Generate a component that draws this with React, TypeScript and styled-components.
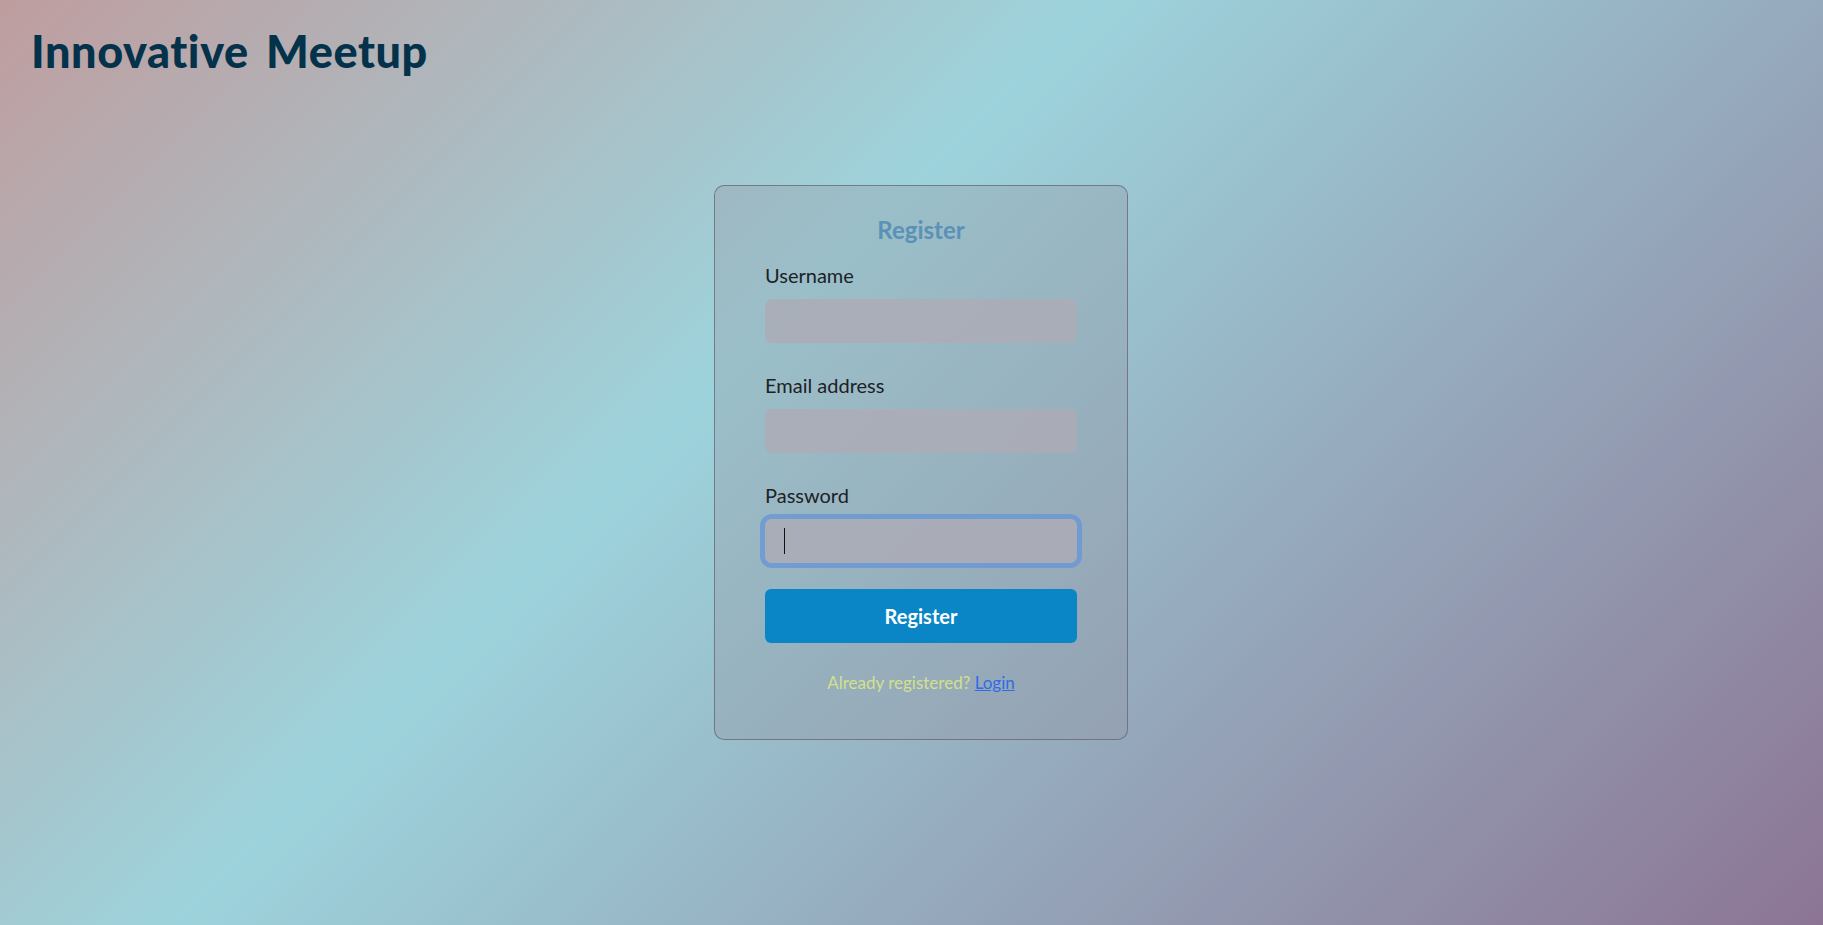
import React from "react";
import styled, { createGlobalStyle } from "styled-components";

const Global = createGlobalStyle`
  html, body { margin: 0; padding: 0; }
  body {
    font-family: "Segoe UI", Lato, "Open Sans", sans-serif;
    min-height: 100vh;
  }
  * { box-sizing: border-box; }
`;

const Page = styled.div`
  min-height: 925px;
  background: linear-gradient(135deg, #bf9d9f 0%, #9dd3dc 40%, #8c7594 100%);
  display: flex;
  flex-direction: column;
`;

const Header = styled.header`
  padding: 19px 31px 0;
  height: 185px;
`;

const Brand = styled.h1`
  margin: 0;
  font-family: "Comic Sans MS", Lato, sans-serif;
  font-weight: 900;
  font-size: 45px;
  line-height: 64px;
  letter-spacing: 0.6px;
  word-spacing: 6px;
  color: #04324a;
`;

const Main = styled.main`
  display: flex;
  justify-content: center;
  padding-left: 19px;
`;

const Card = styled.form`
  width: 414px;
  padding: 28px 50px 44px;
  border: 1px solid rgba(100, 100, 112, 0.75);
  border-radius: 10px;
  background: rgba(150, 150, 162, 0.32);
  display: flex;
  flex-direction: column;
`;

const Title = styled.h2`
  margin: 0 0 14px;
  text-align: center;
  font-size: 24px;
  line-height: 32px;
  font-weight: 700;
  color: #5a91b6;
`;

const Field = styled.div<{ $last?: boolean }>`
  display: flex;
  flex-direction: column;
  margin-bottom: ${(p) => (p.$last ? "26px" : "27px")};
`;

const Label = styled.label`
  font-size: 20px;
  line-height: 30px;
  color: #1d2226;
  margin-bottom: 9px;
`;

const InputWrap = styled.div`
  position: relative;
`;

const Input = styled.input<{ $focused?: boolean }>`
  width: 100%;
  height: 44px;
  padding: 0 18px;
  font-size: 20px;
  font-family: inherit;
  border: none;
  border-radius: 7px;
  background: rgba(172, 172, 182, 0.85);
  outline: none;
  caret-color: transparent;
  box-shadow: ${(p) => (p.$focused ? "0 0 0 5px rgba(104, 150, 214, 0.8)" : "none")};
`;

const Caret = styled.span`
  position: absolute;
  left: 19px;
  top: 9px;
  width: 1px;
  height: 26px;
  background: #111;
`;

const Button = styled.button`
  height: 54px;
  border: none;
  border-radius: 6px;
  background: #0a85c5;
  color: #fff;
  font-family: inherit;
  font-size: 20px;
  font-weight: 700;
  cursor: pointer;
`;

const Footer = styled.p`
  margin: 28px 0 0;
  text-align: center;
  font-size: 17px;
  line-height: 24px;
  color: #d3e08c;
`;

const LoginLink = styled.a`
  color: #2f6be8;
  text-decoration: underline;
`;

export default function App() {
  return (
    <>
      <Global />
      <Page>
        <Header>
          <Brand>Innovative Meetup</Brand>
        </Header>
        <Main>
          <Card onSubmit={(e) => e.preventDefault()}>
            <Title>Register</Title>
            <Field>
              <Label htmlFor="username">Username</Label>
              <Input id="username" type="text" />
            </Field>
            <Field>
              <Label htmlFor="email">Email address</Label>
              <Input id="email" type="email" />
            </Field>
            <Field $last>
              <Label htmlFor="password">Password</Label>
              <InputWrap>
                <Input id="password" type="password" $focused />
                <Caret />
              </InputWrap>
            </Field>
            <Button type="submit">Register</Button>
            <Footer>
              Already registered? <LoginLink href="#">Login</LoginLink>
            </Footer>
          </Card>
        </Main>
      </Page>
    </>
  );
}
